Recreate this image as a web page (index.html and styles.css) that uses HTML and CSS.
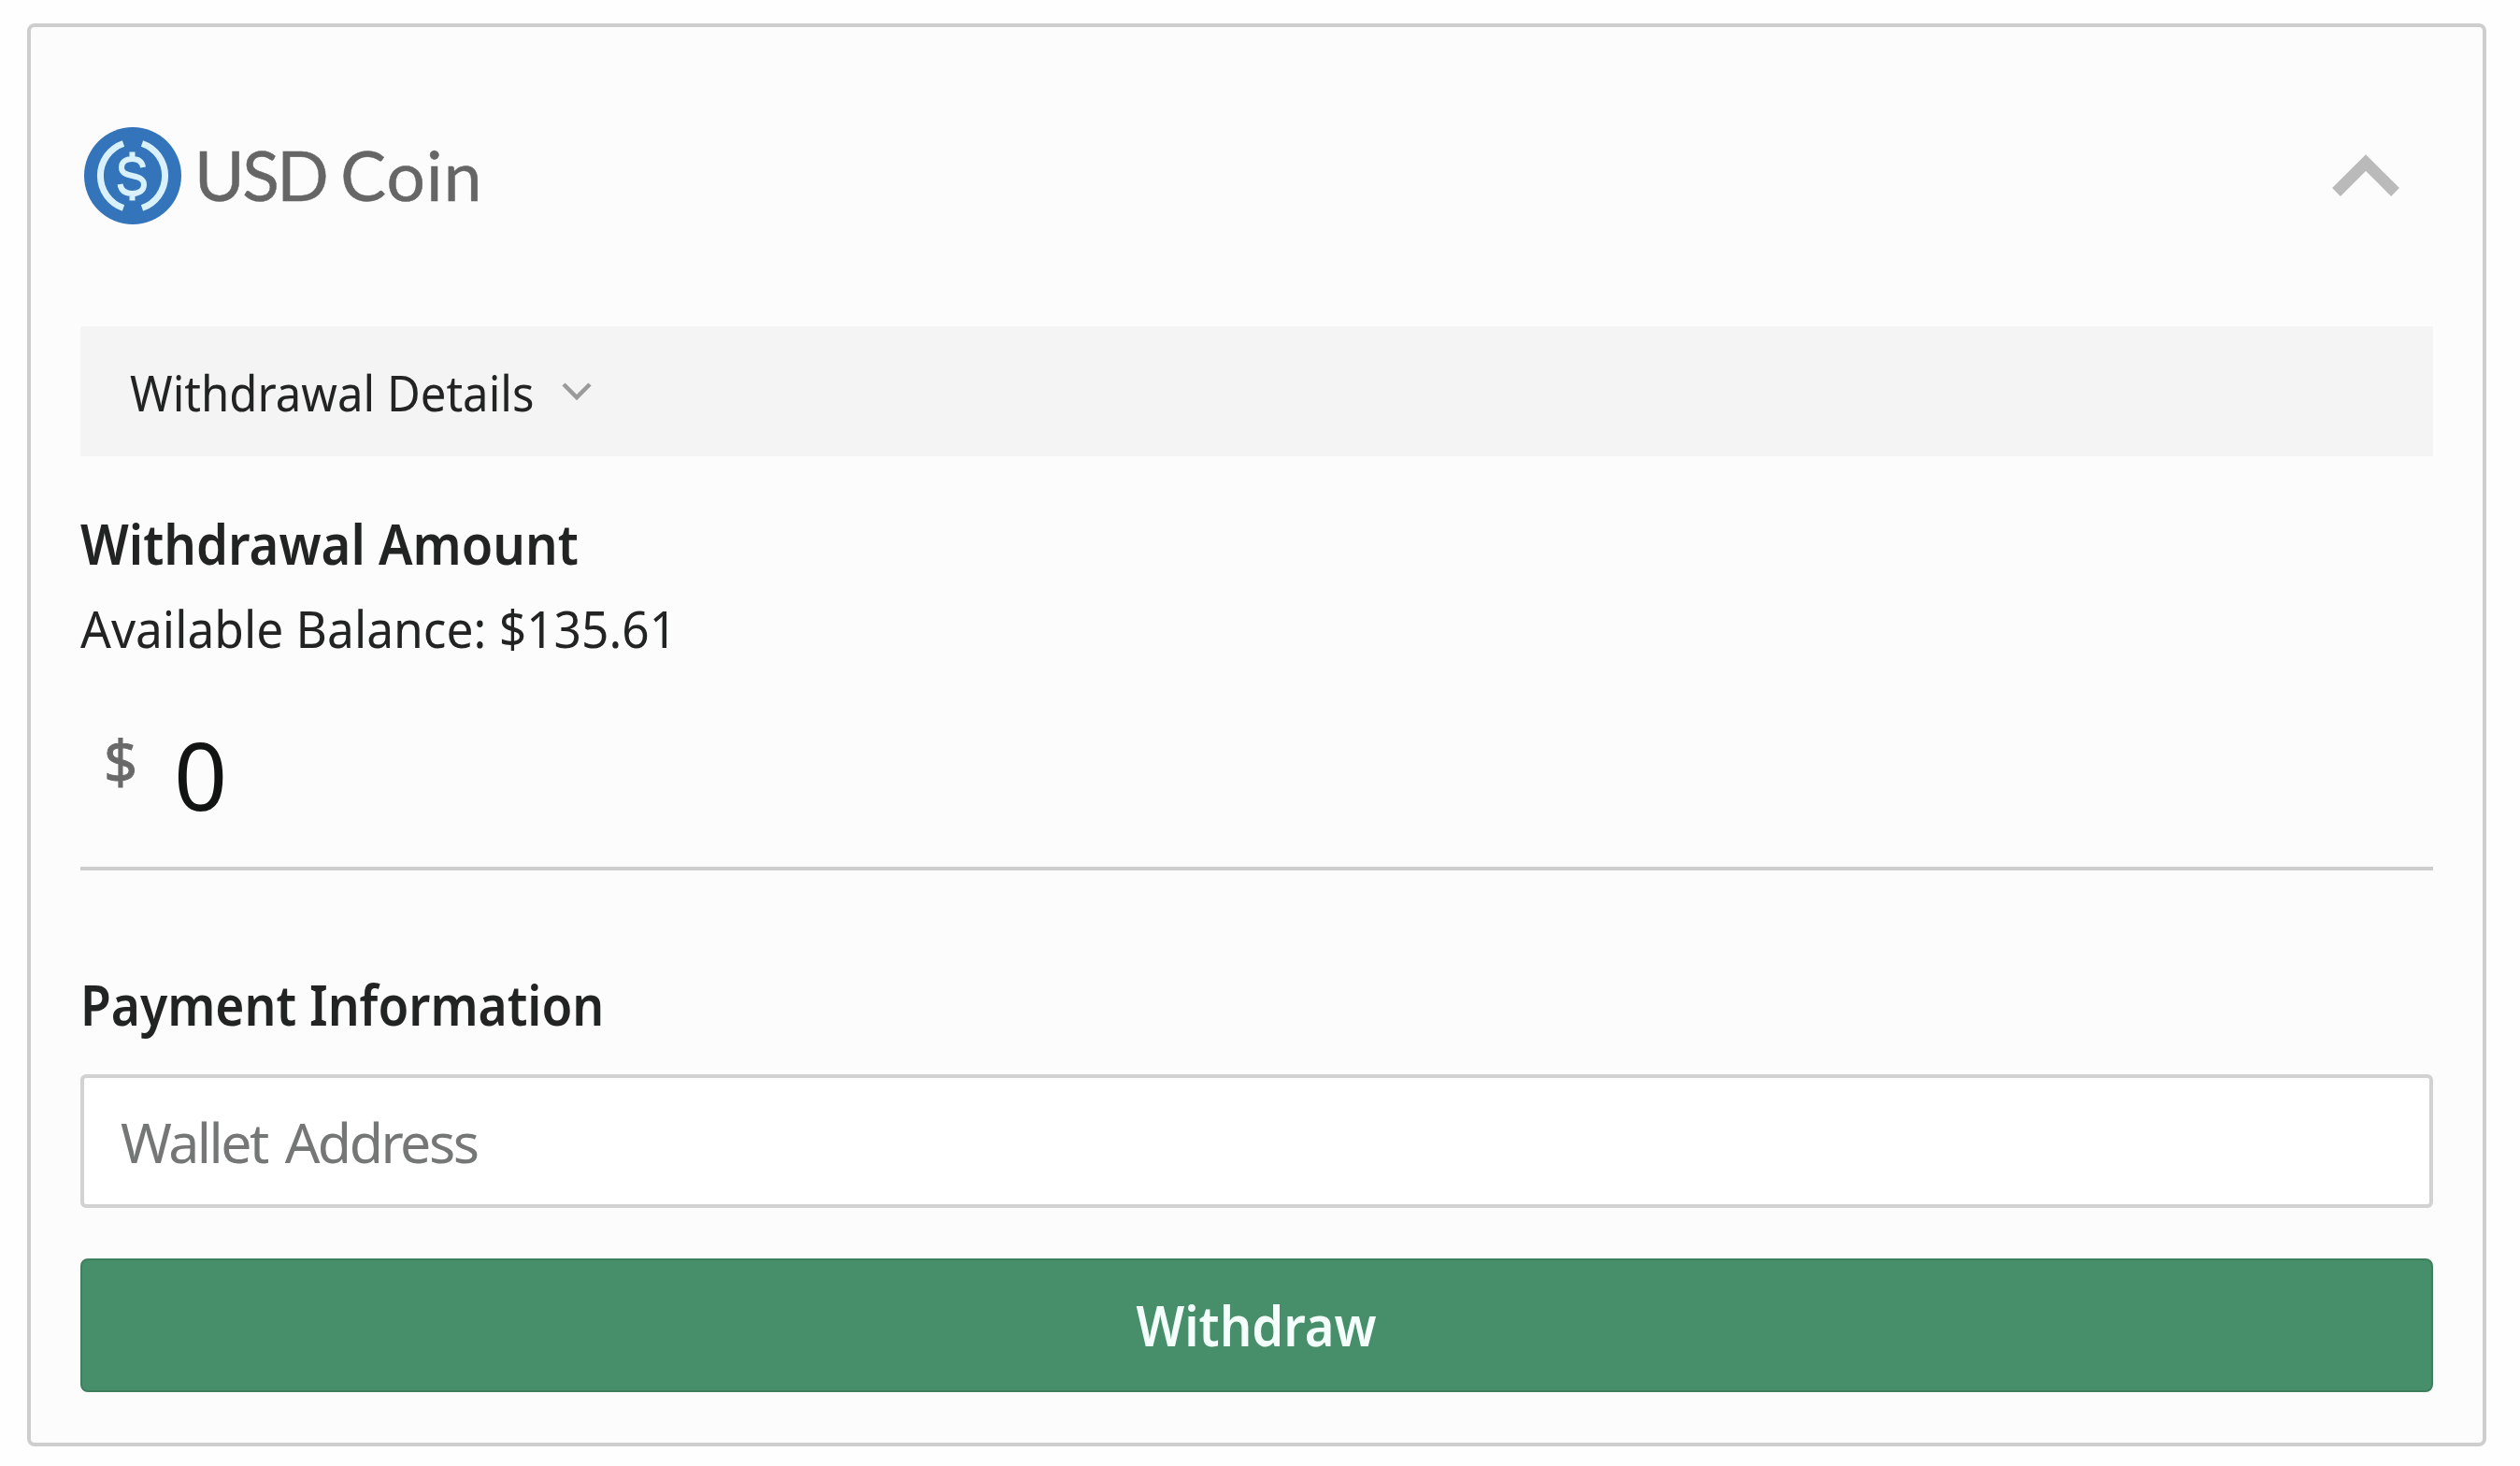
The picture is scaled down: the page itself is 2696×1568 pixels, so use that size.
FILE: index.html
```
<!DOCTYPE html>
<html lang="en">
<head>
    <meta charset="UTF-8">
    <meta name="viewport" content="width=device-width, initial-scale=1.0">
    <title>Withdraw</title>
    <link rel="stylesheet" href="styles.css">
</head>
<body>

<form class="card" onsubmit="return false;">
    <div class="card-header">
        <div class="coin">
            <svg class="coin-logo" viewBox="0 0 104 104">
                <circle cx="52" cy="52" r="52" fill="#3474ba"/>
                <g fill="none" stroke="#d8f1fd">
                    <path d="M42 17.500A36.500 36.500 0 0 0 42 86.500M62 17.500A36.500 36.500 0 0 1 62 86.500" stroke-width="7"/>
                    <path d="M63 43C62 36.500 58 34 51.500 34C44.500 34 40 37.500 40 43C40 48.500 44 50.500 51.500 52C60 53.700 64 56 64 61.500C64 67.500 59 71 51.500 71C44 71 39.500 67.500 38.500 61M51.500 26.500V35M51.500 70V78.500" stroke-width="6"/>
                </g>
            </svg>
            <span class="coin-name"><span class="usd">USD</span> Coin</span>
        </div>
        <svg class="collapse-icon" viewBox="0 0 72 46">
            <path d="M4.500 40.500L36 9L67.500 40.500" fill="none" stroke="#bababa" stroke-width="12.500"/>
        </svg>
    </div>

    <div class="details">
        <span class="details-label">Withdrawal Details</span>
        <svg class="details-icon" viewBox="0 0 32 20">
            <path d="M2 2L16 16L30 2" fill="none" stroke="#9b9b9b" stroke-width="4.500"/>
        </svg>
    </div>

    <h2 class="title title-amount">Withdrawal Amount</h2>
    <p class="balance">Available Balance: $135.61</p>

    <div class="amount">
        <span class="currency">$</span>
        <span class="value">0</span>
    </div>

    <h2 class="title title-payment">Payment Information</h2>
    <input class="wallet" type="text" placeholder="Wallet Address">
    <button class="withdraw-btn" type="submit"><span>Withdraw</span></button>
</form>

</body>
</html>
```

FILE: styles.css
```
* {
    box-sizing: border-box;
}

body {
    margin: 0;
    padding: 25px 36px 21px 29px;
    background-color: #fefefe;
    font-family: 'Noto Sans', 'Open Sans', sans-serif;
    color: #222424;
}

.card {
    height: 1522px;
    padding: 0 53px;
    background-color: #fcfcfc;
    border: 4px solid #cecece;
    border-radius: 8px;
}

.card-header {
    height: 320px;
    padding: 0 36px 2px 4px;
    display: flex;
    justify-content: space-between;
    align-items: center;
}

.coin {
    display: flex;
    align-items: center;
    gap: 14px;
}

.coin-logo {
    width: 104px;
    height: 104px;
}

.coin-name {
    padding-bottom: 3px;
    font-family: Lato, sans-serif;
    font-size: 73px;
    line-height: 100px;
    letter-spacing: 1.2px;
    word-spacing: -5px;
    color: #666;
    -webkit-text-stroke: 0.5px #666;
}

.usd {
    letter-spacing: -2.5px;
}

.collapse-icon {
    width: 72px;
    height: 46px;
}

.details {
    height: 139px;
    padding: 1px 53px 0;
    display: flex;
    align-items: center;
    gap: 31px;
    background-color: #f4f4f4;
}

.details-label {
    width: 431px;
    font-size: 53px;
    white-space: nowrap;
    transform: scaleX(0.926);
    transform-origin: left;
}

.details-icon {
    width: 32px;
    height: 20px;
}

.title {
    margin: 0;
    font-size: 59px;
    font-weight: 600;
    line-height: 80px;
    transform-origin: left;
}

.title-amount {
    margin-top: 53px;
    transform: scaleX(0.922);
}

.title-payment {
    margin-top: 103px;
    transform: scaleX(0.903);
}

.balance {
    margin: 14px 0 0;
    font-size: 54.5px;
    line-height: 74px;
    transform: scaleX(0.944);
    transform-origin: left;
}

.amount {
    height: 222px;
    padding: 51px 25px 0;
    display: flex;
    align-items: flex-start;
    gap: 39px;
    border-bottom: 4px solid #cdcdcd;
}

.currency {
    margin-top: 11px;
    font-size: 63px;
    line-height: 86px;
    color: #696969;
    -webkit-text-stroke: 1px #696969;
}

.value {
    font-size: 100px;
    line-height: 136px;
    color: #121414;
}

.wallet {
    display: block;
    width: 100%;
    height: 143px;
    margin-top: 35px;
    padding: 0 39px;
    background-color: #fff;
    border: 4px solid #d2d2d2;
    border-radius: 6px;
    font-family: inherit;
    font-size: 59px;
    letter-spacing: -2.5px;
    word-spacing: 6px;
}

.wallet::placeholder {
    color: #757777;
}

.withdraw-btn {
    display: block;
    width: 100%;
    height: 143px;
    margin-top: 54px;
    padding: 0 0 2px;
    background-color: #478e6a;
    border: 2px solid #3f7f5d;
    border-radius: 8px;
    font-family: inherit;
    font-size: 60px;
    font-weight: 600;
    color: #f4fffb;
    cursor: pointer;
}

.withdraw-btn span {
    display: inline-block;
    transform: scaleX(0.905);
}
```
